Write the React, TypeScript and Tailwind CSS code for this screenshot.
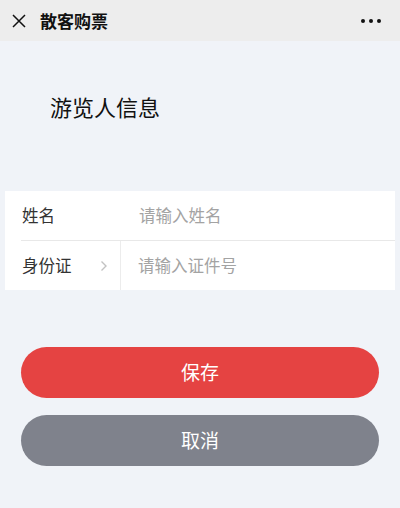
export default function App() {
  return (
    <div
      className="flex h-[508px] w-[400px] flex-col bg-[#f0f3f8]"
      style={{ fontFamily: '"Noto Sans CJK SC", "Noto Sans", sans-serif' }}
    >
      <header className="flex h-[41px] items-center bg-[#ededed] px-[12px]">
        <svg width="14" height="14" viewBox="0 0 14 14" className="shrink-0">
          <path d="M1 1 L13 13 M13 1 L1 13" stroke="#111" strokeWidth="1.5" />
        </svg>
        <h1 className="ml-[14px] text-[17px] font-bold leading-none text-[#111]">散客购票</h1>
        <div className="ml-auto mr-[7px] flex gap-[4px]">
          <span className="h-[4px] w-[4px] rounded-full bg-[#111]" />
          <span className="h-[4px] w-[4px] rounded-full bg-[#111]" />
          <span className="h-[4px] w-[4px] rounded-full bg-[#111]" />
        </div>
      </header>

      <h2 className="ml-[50px] mt-[50px] text-[22px] leading-[30px] text-[#111]">游览人信息</h2>

      <div className="mx-[5px] mt-[70px] bg-white">
        <div className="flex h-[49px] items-center">
          <span className="w-[117px] pl-[17px] text-[16.5px] text-[#333]">姓名</span>
          <span className="pl-[17px] text-[16.5px] text-[#a3a3a3]">请输入姓名</span>
        </div>
        <div className="ml-[16px] h-px bg-[#e8e8e8]" />
        <div className="flex h-[49px] items-stretch">
          <div className="flex w-[116px] items-center border-r border-[#ececec] pl-[17px]">
            <span className="text-[16.5px] text-[#333]">身份证</span>
            <svg width="8" height="12" viewBox="0 0 8 12" className="ml-[28px]">
              <path d="M1.5 1.5 L6 6 L1.5 10.5" fill="none" stroke="#c2c2c2" strokeWidth="1.4" />
            </svg>
          </div>
          <span className="flex items-center pl-[17px] text-[16.5px] text-[#a3a3a3]">请输入证件号</span>
        </div>
      </div>

      <div className="mx-[21px] mt-[57px] flex flex-col gap-[17px]">
        <button className="h-[51px] rounded-full bg-[#e54342] text-[19px] text-white">保存</button>
        <button className="h-[51px] rounded-full bg-[#7f828c] text-[19px] text-white">取消</button>
      </div>
    </div>
  );
}
